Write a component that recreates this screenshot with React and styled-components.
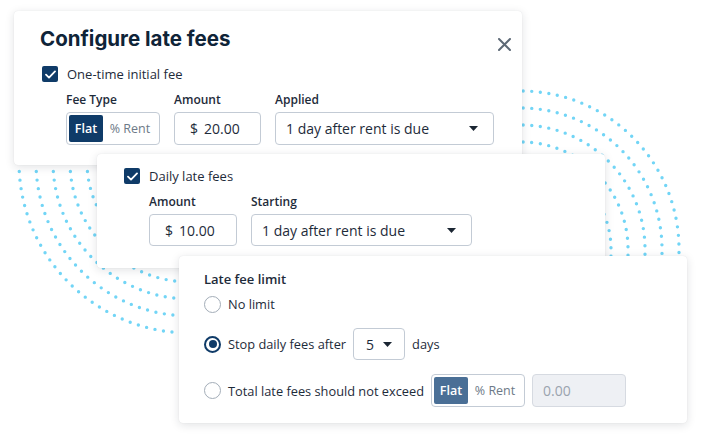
import React from "react";
import styled, { createGlobalStyle } from "styled-components";

const NAVY = "#0f3b68";
const TEXT = "#1e2b3a";

const Global = createGlobalStyle`
  html, body { margin: 0; padding: 0; background: #fff; }
  body { font-family: "Open Sans", "Liberation Sans", sans-serif; color: ${TEXT}; }
`;

const Stage = styled.div`
  position: relative;
  width: 701px;
  height: 442px;
  overflow: hidden;
  background: #fff;
`;

const Dots = styled.svg`
  position: absolute;
  left: 0;
  top: 0;
`;

const Stack = styled.div`
  position: relative;
  display: flex;
  flex-direction: column;
  align-items: flex-start;
  padding: 11px 0 0 14px;
`;

const Card = styled.div`
  position: relative;
  box-sizing: border-box;
  width: 508px;
  height: ${(p) => p.$h}px;
  margin-left: ${(p) => p.$left || 0}px;
  margin-top: ${(p) => (p.$overlap ? -p.$overlap : 0)}px;
  padding: ${(p) => p.$pad};
  background: #fff;
  border-radius: 4px;
  box-shadow: 0 2px 10px rgba(20, 30, 45, 0.13), 0 0 1px rgba(20, 30, 45, 0.12);
`;

const Title = styled.h2`
  margin: 0 0 9px 0;
  font-family: "Inter", "Liberation Sans", sans-serif;
  font-size: 20.5px;
  font-weight: 700;
  line-height: 32px;
  color: #0f2438;
`;

const Close = styled.svg`
  position: absolute;
  top: 27px;
  right: 11px;
`;

const CheckRow = styled.div`
  display: flex;
  align-items: center;
  gap: 9px;
  height: 20px;
  font-size: 13px;
  margin-left: ${(p) => p.$indent || 0}px;
`;

const Box = styled.span`
  width: 16px;
  height: 16px;
  border-radius: 2px;
  background: ${NAVY};
  display: flex;
  align-items: center;
  justify-content: center;
`;

const Fields = styled.div`
  display: flex;
  gap: 14px;
  margin: 8px 0 0 ${(p) => p.$indent}px;
`;

const Field = styled.div`
  display: flex;
  flex-direction: column;
  gap: 4px;
`;

const Label = styled.div`
  font-size: 12px;
  font-weight: 600;
  line-height: 16px;
  color: ${TEXT};
`;

const Control = styled.div`
  box-sizing: border-box;
  display: flex;
  align-items: center;
  width: ${(p) => p.$w}px;
  height: ${(p) => p.$h || 33}px;
  border: 1px solid ${(p) => (p.$disabled ? "#d6dae1" : "#c3cbd5")};
  background: ${(p) => (p.$disabled ? "#eef0f4" : "#fff")};
  color: ${(p) => (p.$disabled ? "#9aa3ae" : TEXT)};
  border-radius: 4px;
  font-size: 14px;
  padding: 0 ${(p) => p.$padR || 10}px 0 ${(p) => p.$padL || 10}px;
  justify-content: space-between;
`;

const Money = styled.span`
  display: flex;
  gap: 6px;
`;

const Caret = () => (
  <svg width="9" height="5" viewBox="0 0 9 5">
    <path d="M0 0h9L4.5 5z" fill="#1b2633" />
  </svg>
);

const Segment = styled.div`
  box-sizing: border-box;
  display: flex;
  align-items: stretch;
  width: 94px;
  height: 33px;
  padding: 2px;
  border: 1px solid #c3cbd5;
  border-radius: 4px;
  background: #fff;
`;

const SegBtn = styled.div`
  display: flex;
  align-items: center;
  justify-content: center;
  width: ${(p) => (p.$on ? 34 : 54)}px;
  border-radius: 2px;
  font-size: 12.5px;
  font-weight: ${(p) => (p.$on ? 600 : 500)};
  background: ${(p) => (p.$on ? (p.$muted ? "#4a6f96" : NAVY) : "transparent")};
  color: ${(p) => (p.$on ? "#fff" : "#6d7987")};
`;

const LimitTitle = styled.div`
  font-size: 13px;
  font-weight: 600;
  line-height: 20px;
  margin-bottom: 5px;
`;

const Options = styled.div`
  display: flex;
  flex-direction: column;
  gap: 14px;
`;

const Option = styled.div`
  display: flex;
  align-items: center;
  min-height: 20px;
  font-size: 12.8px;
  gap: 7px;
`;

const Radio = styled.span`
  box-sizing: border-box;
  width: 17px;
  height: 17px;
  border-radius: 50%;
  border: ${(p) => (p.$on ? `2px solid ${NAVY}` : "1.5px solid #a3adb8")};
  display: flex;
  align-items: center;
  justify-content: center;
  &::after {
    content: "";
    display: ${(p) => (p.$on ? "block" : "none")};
    width: 8px;
    height: 8px;
    border-radius: 50%;
    background: ${NAVY};
  }
`;

const Inline = styled.div`
  display: flex;
  align-items: center;
  gap: 7px;
`;

const Check = () => (
  <Box>
    <svg width="11" height="9" viewBox="0 0 11 9">
      <path d="M1 4.6l3 3L10 1.4" fill="none" stroke="#fff" strokeWidth="1.8" strokeLinecap="round" strokeLinejoin="round" />
    </svg>
  </Box>
);

function ring(i) {
  const d = i * 17;
  const rl = 171 - d;
  const rr = 158 - d;
  const left = `M${19 + d} 120 L${19 + d} 162 A${rl} ${rl} 0 0 0 190 ${333 - d} L330 ${333 - d}`;
  const right = `M420 ${91 + d} L521 ${91 + d} A${rr} ${rr} 0 0 1 ${679 - d} 249 L${679 - d} 330`;
  return [left, right];
}

export default function App() {
  return (
    <Stage>
      <Global />
      <Dots width="701" height="442">
        {[0, 1, 2, 3, 4].map((i) =>
          ring(i).map((d, k) => (
            <path key={i + "-" + k} d={d} fill="none" stroke="#72d5f6" strokeWidth="3.4" strokeLinecap="round" strokeDasharray="0 8.6" />
          ))
        )}
      </Dots>
      <Stack>
        <Card $h={154} $pad="12px 26px 0 26px">
          <Title>Configure late fees</Title>
          <Close width="13" height="13" viewBox="0 0 13 13">
            <path d="M1 1l11 11M12 1L1 12" stroke="#5d6976" strokeWidth="2" strokeLinecap="round" />
          </Close>
          <CheckRow $indent={2}>
            <Check />
            One-time initial fee
          </CheckRow>
          <Fields $indent={26}>
            <Field>
              <Label>Fee Type</Label>
              <Segment>
                <SegBtn $on>Flat</SegBtn>
                <SegBtn>% Rent</SegBtn>
              </Segment>
            </Field>
            <Field>
              <Label>Amount</Label>
              <Control $w={87} $padL={15}>
                <Money>
                  <span>$</span>
                  <span>20.00</span>
                </Money>
              </Control>
            </Field>
            <Field>
              <Label>Applied</Label>
              <Control $w={219} $padR={15}>
                1 day after rent is due
                <Caret />
              </Control>
            </Field>
          </Fields>
        </Card>

        <Card $h={114} $left={83} $overlap={11} $pad="12px 27px 0 27px">
          <CheckRow>
            <Check />
            Daily late fees
          </CheckRow>
          <Fields $indent={25}>
            <Field>
              <Label>Amount</Label>
              <Control $w={88} $h={32} $padL={15}>
                <Money>
                  <span>$</span>
                  <span>10.00</span>
                </Money>
              </Control>
            </Field>
            <Field>
              <Label>Starting</Label>
              <Control $w={221} $h={32} $padR={15}>
                1 day after rent is due
                <Caret />
              </Control>
            </Field>
          </Fields>
        </Card>

        <Card $h={167} $left={165} $overlap={12} $pad="13px 25px 0 25px">
          <LimitTitle>Late fee limit</LimitTitle>
          <Options>
            <Option>
              <Radio />
              No limit
            </Option>
            <Option>
              <Radio $on />
              Stop daily fees after
              <Control $w={52} $h={32} $padL={12} $padR={12}>
                5
                <Caret />
              </Control>
              <span>days</span>
            </Option>
            <Option>
              <Radio />
              Total late fees should not exceed
              <Inline>
                <Segment>
                  <SegBtn $on $muted>Flat</SegBtn>
                  <SegBtn>% Rent</SegBtn>
                </Segment>
                <Control $w={94} $disabled>
                  0.00
                </Control>
              </Inline>
            </Option>
          </Options>
        </Card>
      </Stack>
    </Stage>
  );
}
